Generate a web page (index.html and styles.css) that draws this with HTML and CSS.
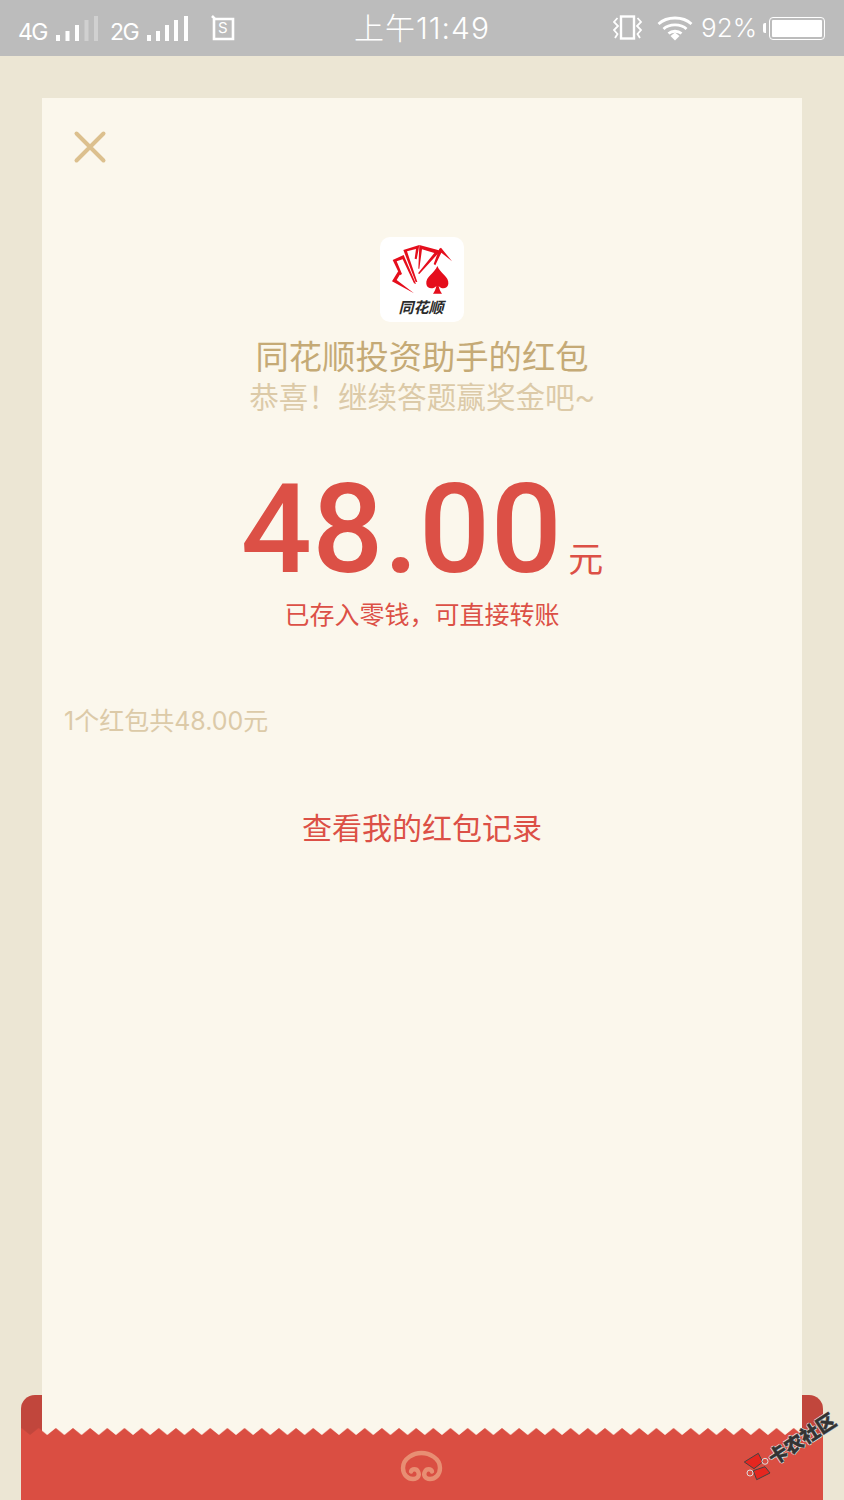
FILE: index.html
```html
<!DOCTYPE html>
<html lang="zh">
<head>
<meta charset="utf-8">
<title>红包</title>
<link rel="stylesheet" href="styles.css">
</head>
<body>
<div class="screen">
  <header class="status">
    <div class="status-left">
      <span class="net">4G</span>
      <svg class="bars" width="43" height="26" viewBox="0 0 43 26"><g fill="#fff"><rect x="0" y="19" width="4" height="6"/><rect x="9.500" y="15" width="4" height="10"/><rect x="19" y="9" width="4" height="16"/></g><g fill="#d0d0d0"><rect x="28.500" y="4" width="4" height="21"/><rect x="38" y="0" width="4" height="25"/></g></svg>
      <span class="net net-2">2G</span>
      <svg class="bars" width="43" height="26" viewBox="0 0 43 26"><g fill="#fff"><rect x="0" y="19" width="4" height="6"/><rect x="9" y="15" width="4" height="10"/><rect x="18" y="9" width="4" height="16"/><rect x="27" y="4" width="4" height="21"/><rect x="37" y="0" width="4" height="25"/></g></svg>
      <div class="sim">
        <svg width="24" height="26" viewBox="0 0 24 26"><path d="M1 1 L4 4 H22 V24 H3 V4" fill="none" stroke="#fff" stroke-width="2.600"/></svg>
        <span class="sim-s">S</span>
      </div>
    </div>
    <div class="clock">上午11:49</div>
    <div class="status-right">
      <svg width="30" height="26" viewBox="0 0 30 26"><rect x="8" y="1.500" width="13" height="22" fill="none" stroke="#fff" stroke-width="2.400"/><path d="M4.500 3 L1 7 L5 11 L1 15 L4.500 19 L2 23 M24.500 3 L28 7 L24 11 L28 15 L24.500 19 L27 23" fill="none" stroke="#fff" stroke-width="1.800"/></svg>
      <svg class="wifi" width="36" height="26" viewBox="0 0 36 26"><g fill="none" stroke="#fff" stroke-width="2.800"><path d="M1.500 9 C10 1 26 1 34.500 9"/><path d="M6.500 14 C12 8.500 24 8.500 29.500 14"/><path d="M11.500 18.500 C15 15.500 21 15.500 24.500 18.500"/></g><path d="M13.500 21 L18 17.500 L22.500 21 L18 25.500 Z" fill="#fff"/></svg>
      <span class="pct">92%</span>
      <div class="battery"><span class="battery-fill"></span></div>
    </div>
  </header>

  <main class="card">
    <svg class="close" width="36" height="36" viewBox="0 0 36 36"><path d="M4.500 4.500 L31.500 31.500 M31.500 4.500 L4.500 31.500" stroke="#dcc08e" stroke-width="4" stroke-linecap="round"/></svg>
    <div class="logo">
      <svg class="logo-mark" width="84" height="62" viewBox="60 37 252 186">
        <g fill="#e50e1c">
          <path d="M96 170 L115 139 L122 146 L110 166 L162 206 Z"/>
          <path d="M98 106 L131 91 L168 178 L162 176 L128 104 L110 110 L126 148 L120 152 Z"/>
          <path d="M130 76 L178 61 L175 78 L170 104 L164 102 L168 73 L141 80 L172 172 L167 172 Z"/>
          <path d="M178 61 L242 78 L178 148 L174 146 L223 85 L186 74 L178 132 L175 132 Z"/>
          <path d="M238 72 L243 69 L276 110 L244 84 L226 122 L221 118 Z"/>
        </g>
        <path d="M232 124 C240 146 268 156 265 178 C262 194 244 194 236 184 C238 194 241 201 246 207 H219 C224 201 227 194 229 184 C221 194 201 194 199 178 C196 156 224 146 232 124 Z" fill="#e50e1c"/>
      </svg>
      <span class="logo-name">同花顺</span>
    </div>
    <h1 class="title">同花顺投资助手的红包</h1>
    <p class="subtitle">恭喜&#xFF01;继续答题赢奖金吧~</p>
    <div class="amount"><span class="amount-num">48.00</span><span class="amount-unit">元</span></div>
    <p class="note">已存入零钱&#xFF0C;可直接转账</p>
    <p class="summary">1个红包共48.00元</p>
    <a class="record">查看我的红包记录</a>
  </main>

  <div class="env-back"></div>
  <footer class="env-front">
    <svg class="zigzag" width="802" height="8" viewBox="0 0 802 8">
      <defs><pattern id="teeth" width="17.160" height="8" patternUnits="userSpaceOnUse" x="0.500"><path d="M0 0 L8.580 7 L17.160 0 V8 H0 Z" fill="#da4e42"/></pattern></defs>
      <rect width="802" height="8" fill="url(#teeth)"/>
    </svg>
    <svg class="knot" width="44" height="33" viewBox="0 0 44 33"><path d="M21.500 4 C14 4 3 9 3 19 C3 26 8 30 13 30 C18 30 20 26 18 22.500 C16.500 19.500 12 19.500 11 22.500 M21.500 4 C29 4 40 9 40 19 C40 26 35 30 30 30 C25 30 23 26 25 22.500 C26.500 19.500 31 19.500 32 22.500" fill="none" stroke="#e88e73" stroke-width="4.400" stroke-linecap="round"/></svg>
  </footer>

  <div class="mark">
    <svg class="mark-icon" width="28" height="28" viewBox="0 0 28 28"><g transform="rotate(33 14 14)" stroke="#444" stroke-width="1"><path d="M1.300 9 L15.300 0.300 L19.700 9 L11 15.700 Z" fill="#e5261f"/><path d="M10.300 17.700 L22 13.700 L27 20 L13.700 26.700 Z" fill="#e5261f"/><circle cx="7" cy="20" r="3" fill="none" stroke="#ddd"/><circle cx="22" cy="8.300" r="3" fill="none" stroke="#ddd"/></g></svg>
    <span class="mark-text">卡农社区</span>
  </div>
</div>
</body>
</html>
```

FILE: styles.css
```css
* { box-sizing: border-box; }
html, body { margin: 0; padding: 0; }
body { font-family: Roboto, "Noto Sans CJK SC", sans-serif; font-weight: 400; }

.screen {
  position: relative;
  width: 844px;
  height: 1500px;
  overflow: hidden;
  background: #ece6d4;
}

.status {
  display: flex;
  justify-content: space-between;
  align-items: center;
  height: 56px;
  padding: 0 19px 0 18px;
  background: #bcbcbc;
  color: #fff;
  position: relative;
  font-family: Inter, "Noto Sans CJK SC", sans-serif;
  font-weight: 300;
}
.status-left { display: flex; align-items: center; width: 300px; }
.status-right { display: flex; align-items: center; width: 300px; justify-content: flex-end; }
.net { font-size: 23px; font-weight: 400; margin-top: 7px; letter-spacing: -1.500px; width: 38px; }
.net-2 { margin-left: 11px; width: 37px; }
.bars { margin-top: 1px; }
.sim { position: relative; width: 24px; height: 26px; margin-left: 21px; margin-top: 0; }
.sim svg { display: block; }
.sim-s { position: absolute; left: 7px; top: 3px; font-size: 15px; font-weight: 400; line-height: 20px; }
.clock {
  position: absolute;
  left: 0;
  right: 0;
  top: 7px;
  text-align: center;
  font-size: 30px;
  line-height: 42px;
  letter-spacing: 1px;
}
.wifi { margin-left: 14px; }
.pct { font-size: 26px; margin-left: 8px; line-height: 32px; }
.battery {
  position: relative;
  width: 56px;
  height: 23px;
  margin-left: 12px;
  border: 1.500px solid #fff;
  border-radius: 4px;
  padding: 2px;
}
.battery::before {
  content: "";
  position: absolute;
  left: -7px;
  top: 5px;
  width: 3px;
  height: 10px;
  border-radius: 2px 0 0 2px;
  background: #fff;
}
.battery-fill { display: block; height: 100%; background: #fff; border-radius: 1px; }

.card {
  position: relative;
  z-index: 1;
  display: flex;
  flex-direction: column;
  align-items: center;
  width: 760px;
  height: 1337px;
  margin: 42px 0 0 42px;
  background: #fbf7ec;
}
.close { align-self: flex-start; margin: 31px 0 0 30px; }

.logo {
  display: flex;
  flex-direction: column;
  align-items: center;
  width: 84px;
  height: 85px;
  margin-top: 72px;
  background: #fff;
  border-radius: 10px;
}
.logo-mark { display: block; flex: none; }
.logo-name {
  font-size: 15px;
  font-weight: 700;
  font-style: italic;
  line-height: 18px;
  margin-left: -2px;
  color: #2b2b2b;
}

.title {
  margin: 14px 0 0;
  font-size: 33.300px;
  line-height: 44px;
  font-weight: 400;
  color: #c5aa76;
}
.subtitle {
  margin: -1px 0 0;
  font-size: 29.600px;
  line-height: 38px;
  color: #dccaa8;
}
.amount {
  display: flex;
  align-items: baseline;
  justify-content: center;
  margin-top: 41px;
  height: 144px;
  color: #dc5046;
}
.amount-num { font-size: 125px; line-height: 144px; font-weight: 500; letter-spacing: 0.500px; }
.amount-unit { font-size: 35px; margin-left: 6px; line-height: 40px; }
.note {
  margin: -4px 0 0;
  font-size: 25px;
  line-height: 36px;
  color: #dc5046;
}
.summary {
  align-self: flex-start;
  margin: 69px 0 0 22px;
  font-family: Inter, "Noto Sans CJK SC", sans-serif;
  font-size: 25px;
  line-height: 36px;
  color: #dccaa8;
}
.record {
  margin-top: 68px;
  font-size: 30px;
  line-height: 44px;
  color: #dc5046;
}

.env-back {
  position: absolute;
  left: 21px;
  right: 21px;
  bottom: 0;
  height: 105px;
  background: #c1463c;
  border-radius: 14px 14px 0 0;
}
.env-front {
  position: absolute;
  z-index: 2;
  left: 21px;
  right: 21px;
  bottom: 0;
  height: 72px;
  display: flex;
  flex-direction: column;
  align-items: center;
  background: linear-gradient(#da4e42, #da4e42) 0 7px no-repeat;
}
.zigzag { display: block; flex: none; }
.knot { margin-top: 13px; }

.mark {
  position: absolute;
  z-index: 3;
  left: 743px;
  top: 1453px;
  display: flex;
  align-items: center;
  white-space: nowrap;
  transform: rotate(-33deg);
  transform-origin: 14px 14px;
}
.mark-icon { flex: none; }
.mark-text {
  font-family: "Noto Sans CJK SC", sans-serif;
  font-size: 19px;
  font-weight: 900;
  line-height: 24px;
  margin-left: 1px;
  color: #333;
  -webkit-text-stroke: 0.400px #333;
  text-shadow: 1px 0 #ddd, -1px 0 #ddd, 0 1px #ddd, 0 -1px #ddd;
}
```
